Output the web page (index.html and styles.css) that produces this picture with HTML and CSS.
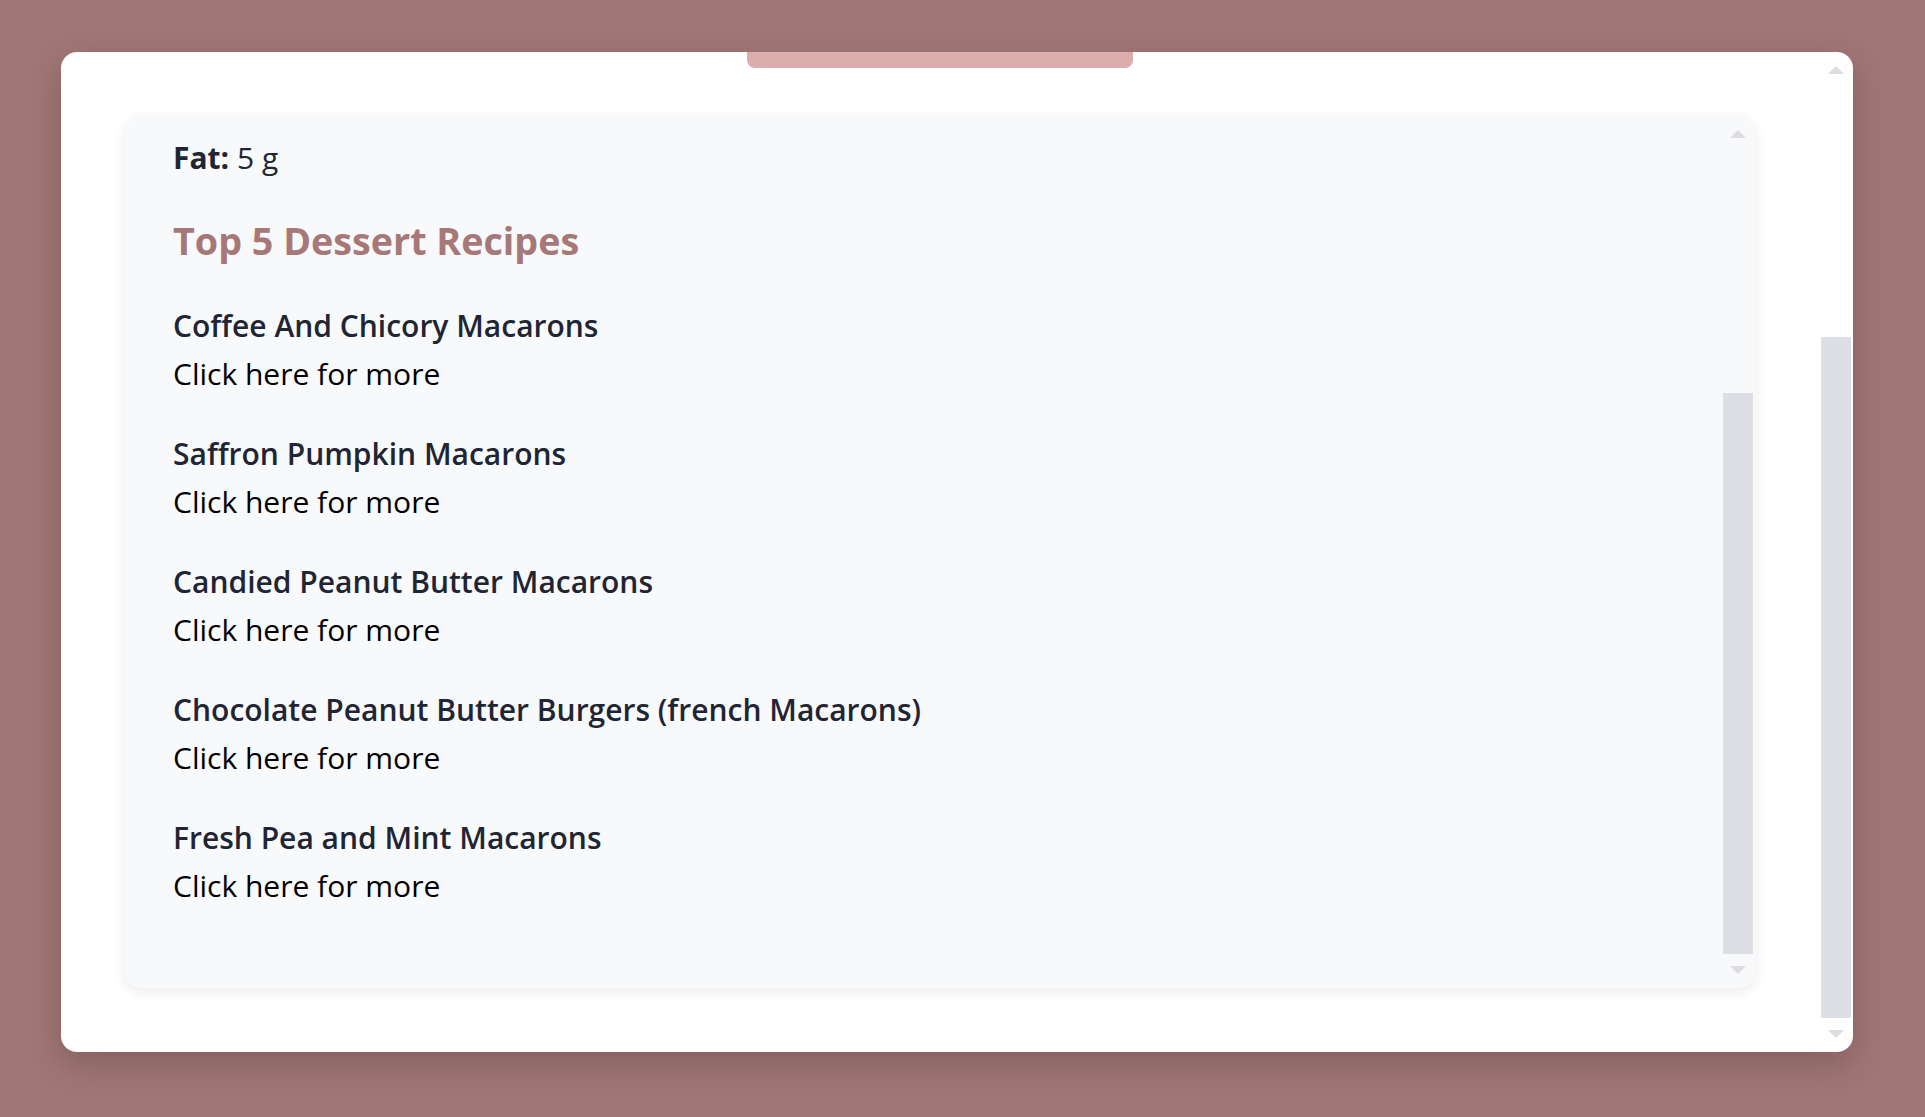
FILE: index.html
```html
<!DOCTYPE html>
<html lang="en">
<head>
<meta charset="utf-8">
<title>Recipe</title>
<link rel="stylesheet" href="styles.css">
</head>
<body>
<div class="page">
  <div class="card">
    <div class="card-body">
      <div class="tab-bar"></div>
      <div class="panel">
        <div class="panel-content">
          <p class="fact"><b>Fat:</b> 5 g</p>
          <h2 class="section-title">Top 5 Dessert Recipes</h2>
          <ul class="recipes">
            <li class="recipe"><span class="recipe-name">Coffee And Chicory Macarons</span><a class="recipe-link">Click here for more</a></li>
            <li class="recipe"><span class="recipe-name">Saffron Pumpkin Macarons</span><a class="recipe-link">Click here for more</a></li>
            <li class="recipe"><span class="recipe-name">Candied Peanut Butter Macarons</span><a class="recipe-link">Click here for more</a></li>
            <li class="recipe"><span class="recipe-name">Chocolate Peanut Butter Burgers (french Macarons)</span><a class="recipe-link">Click here for more</a></li>
            <li class="recipe"><span class="recipe-name">Fresh Pea and Mint Macarons</span><a class="recipe-link">Click here for more</a></li>
          </ul>
        </div>
        <div class="scrollbar panel-scroll">
          <span class="arrow up"></span>
          <div class="track"><div class="thumb"></div></div>
          <span class="arrow down"></span>
        </div>
      </div>
    </div>
    <div class="scrollbar card-scroll">
      <span class="arrow up"></span>
      <div class="track"><div class="thumb"></div></div>
      <span class="arrow down"></span>
    </div>
  </div>
</div>
</body>
</html>
```

FILE: styles.css
```css
* { box-sizing: border-box; }
html, body { margin: 0; padding: 0; }
body {
  background: #a07676;
  font-family: "Open Sans", "Noto Sans", sans-serif;
  color: #1f2533;
}
.page {
  padding: 52px 72px 65px 61px;
}
.card {
  height: 1000px;
  background: #ffffff;
  border-radius: 16px;
  box-shadow: 0 12px 30px rgba(60, 30, 30, 0.25);
  display: flex;
  overflow: hidden;
}
.card-body {
  flex: 1;
  display: flex;
  flex-direction: column;
  align-items: center;
  padding: 0 66px 64px 64px;
}
.tab-bar {
  width: 386px;
  height: 16px;
  background: #dbadad;
  border-radius: 0 0 8px 8px;
  margin-bottom: 48px;
}
.panel {
  align-self: stretch;
  flex: 1;
  background: #f8f9fb;
  border-radius: 16px;
  box-shadow: 0 4px 14px rgba(0, 0, 0, 0.08);
  display: flex;
}
.panel-content {
  flex: 1;
  padding: 19px 48px 0 48px;
}
.fact {
  margin: 0;
  font-size: 30px;
  line-height: 45px;
}
.fact b { font-weight: 700; }
.section-title {
  margin: 36px 0 0 0;
  font-size: 37.7px;
  line-height: 50px;
  font-weight: 700;
  color: #a67878;
}
.recipes {
  list-style: none;
  margin: 35px 0 0 0;
  padding: 0;
  display: flex;
  flex-direction: column;
  gap: 31px;
}
.recipe {
  display: flex;
  flex-direction: column;
}
.recipe-name {
  font-size: 30px;
  line-height: 49px;
  font-weight: 600;
  color: #1f2533;
}
.recipe-link {
  font-size: 30px;
  line-height: 48px;
  color: #000000;
}
.scrollbar {
  width: 30px;
  display: flex;
  flex-direction: column;
  align-items: center;
}
.card-scroll {
  margin-right: 2px;
  padding: 14px 0 14px 0;
}
.panel-scroll {
  margin-right: 2px;
  padding: 14px 0 14px 0;
}
.arrow {
  width: 0;
  height: 0;
  border-left: 8px solid transparent;
  border-right: 8px solid transparent;
}
.arrow.up { border-bottom: 8px solid #dcdce2; }
.arrow.down { border-top: 8px solid #dcdce2; }
.track {
  flex: 1;
  width: 30px;
  display: flex;
  flex-direction: column;
  justify-content: flex-end;
  padding: 0 0 12px 0;
}
.thumb {
  width: 30px;
  background: #dedfe4;
}
.card-scroll .thumb { height: 681px; }
.panel-scroll .thumb { height: 561px; }
```
